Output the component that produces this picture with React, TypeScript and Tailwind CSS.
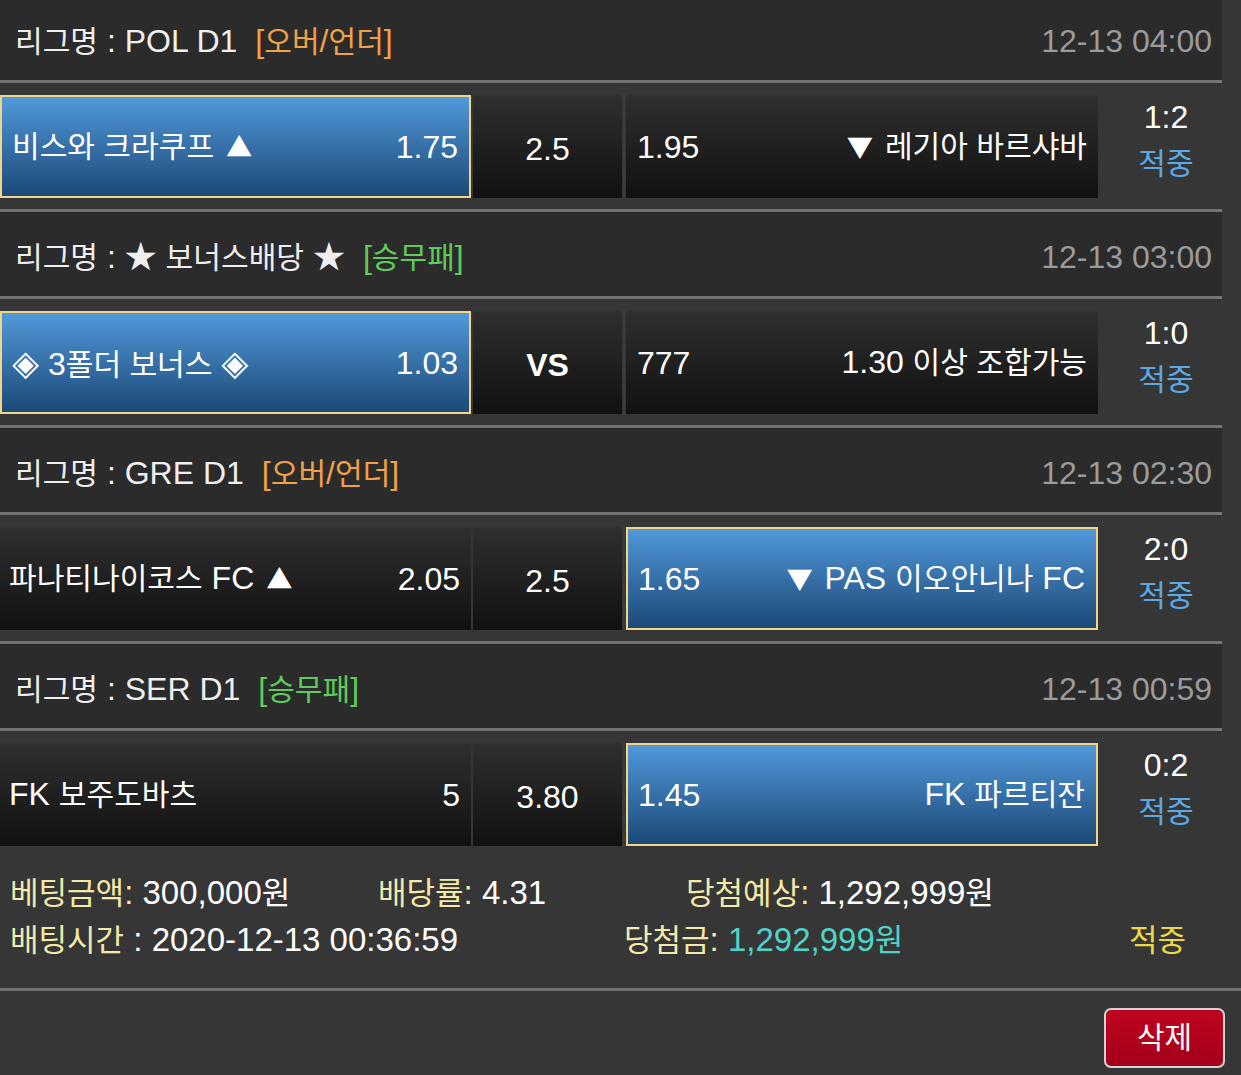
import React from "react";

const SPLIT = /([\u25B2\u25BC]|\u25C8|[\uAC00-\uD7A3\u3131-\u318E]+(?:\s+[\uAC00-\uD7A3\u3131-\u318E]+)*)/;

function T({ s }: { s: string }) {
  const parts = s.split(SPLIT);
  return (
    <>
      {parts.map((p, i) => {
        if (i % 2 === 0) return <React.Fragment key={i}>{p}</React.Fragment>;
        if (p === "▲" || p === "▼")
          return (
            <span key={i} className="mx-[3px] text-[0.82em] font-['Noto_Sans_CJK_KR',sans-serif]">
              {p}
            </span>
          );
        if (p === "◈")
          return (
            <span key={i} className="text-[1.1em] font-['DejaVu_Sans',sans-serif]">
              {p}
            </span>
          );
        return (
          <span key={i} className="text-[0.94em]">
            {p}
          </span>
        );
      })}
    </>
  );
}

type Match = {
  league: string;
  tag: string;
  tagGreen: boolean;
  date: string;
  home: string;
  homeOdds: string;
  mid: string;
  midBold?: boolean;
  awayOdds: string;
  away: string;
  sel: "home" | "away";
  score: string;
};

const matches: Match[] = [
  {
    league: "POL D1",
    tag: "[오버/언더]",
    tagGreen: false,
    date: "12-13 04:00",
    home: "비스와 크라쿠프 ▲",
    homeOdds: "1.75",
    mid: "2.5",
    awayOdds: "1.95",
    away: "▼ 레기아 바르샤바",
    sel: "home",
    score: "1:2",
  },
  {
    league: "★ 보너스배당 ★",
    tag: "[승무패]",
    tagGreen: true,
    date: "12-13 03:00",
    home: "◈ 3폴더 보너스 ◈",
    homeOdds: "1.03",
    mid: "VS",
    midBold: true,
    awayOdds: "777",
    away: "1.30 이상 조합가능",
    sel: "home",
    score: "1:0",
  },
  {
    league: "GRE D1",
    tag: "[오버/언더]",
    tagGreen: false,
    date: "12-13 02:30",
    home: "파나티나이코스 FC ▲",
    homeOdds: "2.05",
    mid: "2.5",
    awayOdds: "1.65",
    away: "▼ PAS 이오안니나 FC",
    sel: "away",
    score: "2:0",
  },
  {
    league: "SER D1",
    tag: "[승무패]",
    tagGreen: true,
    date: "12-13 00:59",
    home: "FK 보주도바츠",
    homeOdds: "5",
    mid: "3.80",
    awayOdds: "1.45",
    away: "FK 파르티잔",
    sel: "away",
    score: "0:2",
  },
];

function Cell({
  selected,
  left,
  right,
  width,
  padL,
}: {
  selected: boolean;
  left: string;
  right: string;
  width: string;
  padL: string;
}) {
  const base =
    "h-full flex items-center justify-between leading-none text-white whitespace-nowrap";
  return selected ? (
    <div
      className={`${base} ${width} border-2 border-[#f2d488] bg-gradient-to-b from-[#5199da] to-[#1d4a79] pl-[10px] pr-[11px]`}
    >
      <span>
        <T s={left} />
      </span>
      <span>
        <T s={right} />
      </span>
    </div>
  ) : (
    <div
      className={`${base} ${width} bg-gradient-to-b from-[#303030] to-[#111111] ${padL} pr-[11px]`}
    >
      <span>
        <T s={left} />
      </span>
      <span>
        <T s={right} />
      </span>
    </div>
  );
}

function MatchBlock({ m, first }: { m: Match; first: boolean }) {
  return (
    <div>
      {!first && <div className="h-[3px] bg-[#737373]" />}
      <div
        className={`${first ? "h-[80px] pt-[2px]" : "h-[84px] pt-[6px]"} bg-[#2b2b2b] flex items-center justify-between pl-[15px] pr-[10px] leading-none`}
      >
        <div className="text-[#efefef] whitespace-nowrap">
          <span className="text-[0.94em]">리그명</span> : <T s={m.league} />
          <span
            className={`ml-[18px] ${m.tagGreen ? "text-[#5fcb5a]" : "text-[#f0a245]"}`}
          >
            <T s={m.tag} />
          </span>
        </div>
        <div className="text-[#9b9b9b]">{m.date}</div>
      </div>
      <div className="h-[3px] bg-[#737373]" />
      <div className="h-[126px] pt-[12px] pb-[11px] flex">
        <Cell
          selected={m.sel === "home"}
          left={m.home}
          right={m.homeOdds}
          width="w-[471px]"
          padL="pl-[9px]"
        />
        <div className="w-[2px]" />
        <div
          className={`w-[149px] h-full flex items-center justify-center pt-[4px] bg-gradient-to-b from-[#303030] to-[#111111] text-white leading-none ${m.midBold ? "font-bold" : ""}`}
        >
          {m.mid}
        </div>
        <div className="w-[4px] flex justify-center">
          <div className="w-[2px] h-full bg-[#3c3c3c]" />
        </div>
        <Cell
          selected={m.sel === "away"}
          left={m.awayOdds}
          right={m.away}
          width="w-[472px]"
          padL="pl-[11px]"
        />
        <div className="w-[124px] flex flex-col items-center justify-center leading-none gap-[16px] pb-[12px] pl-[12px]">
          <div className="text-white">{m.score}</div>
          <div className="text-[#5aa8e4] text-[0.94em]">적중</div>
        </div>
      </div>
    </div>
  );
}

export default function App() {
  return (
    <div className="w-[1241px] min-h-[1075px] bg-[#363636] text-[32px] font-['Liberation_Sans','Noto_Sans_CJK_KR',sans-serif] overflow-hidden">
      <div className="w-[1222px]">
        {matches.map((m, i) => (
          <MatchBlock key={i} m={m} first={i === 0} />
        ))}
      </div>
      <div className="h-[131px] pt-[13px] text-[33px] leading-[46px] whitespace-nowrap">
        <div className="flex">
          <div className="w-[378px] pl-[10px]">
            <span className="text-[#f3e9a8]">
              <T s="베팅금액:" />
            </span>{" "}
            <span className="text-white">
              <T s="300,000원" />
            </span>
          </div>
          <div className="w-[308px]">
            <span className="text-[#f3e9a8]">
              <T s="배당률:" />
            </span>{" "}
            <span className="text-white">4.31</span>
          </div>
          <div>
            <span className="text-[#f3e9a8]">
              <T s="당첨예상:" />
            </span>{" "}
            <span className="text-white">
              <T s="1,292,999원" />
            </span>
          </div>
        </div>
        <div className="flex">
          <div className="w-[624px] pl-[10px]">
            <span className="text-[#f3e9a8]">
              <T s="배팅시간" />
            </span>{" "}
            <span className="text-white">: 2020-12-13 00:36:59</span>
          </div>
          <div className="w-[505px]">
            <span className="text-[#f3e9a8]">
              <T s="당첨금:" />
            </span>{" "}
            <span className="text-[#4fd3c9]">
              <T s="1,292,999원" />
            </span>
          </div>
          <div className="text-[#ead84a]">
            <T s="적중" />
          </div>
        </div>
      </div>
      <div className="h-[3px] bg-[#737373]" />
      <div className="flex justify-end pr-[16px] pt-[17px]">
        <button className="w-[121px] h-[60px] rounded-[7px] border-2 border-[#d4d4d4] bg-gradient-to-b from-[#c0041e] to-[#a3001a] text-white text-[30px] leading-none flex items-center justify-center">
          삭제
        </button>
      </div>
    </div>
  );
}
